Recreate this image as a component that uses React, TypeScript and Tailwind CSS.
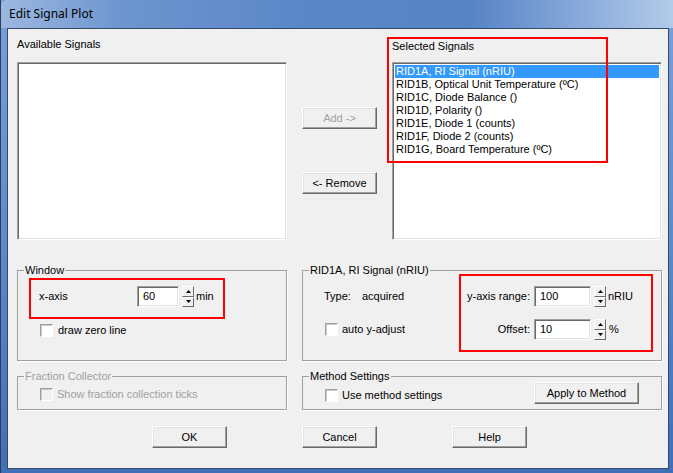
import React from 'react'

const SIGNALS = [
  'RID1A, RI Signal (nRIU)',
  'RID1B, Optical Unit Temperature (ºC)',
  'RID1C, Diode Balance ()',
  'RID1D, Polarity ()',
  'RID1E, Diode 1 (counts)',
  'RID1F, Diode 2 (counts)',
  'RID1G, Board Temperature (ºC)',
]

function Btn({ children, disabled, className = '' }: { children: React.ReactNode; disabled?: boolean; className?: string }) {
  return (
    <div
      className={`flex items-center justify-center h-[22px] bg-[#f0f0f0] border-t border-l border-white border-b border-r border-b-[#696969] border-r-[#696969] shadow-[inset_-1px_-1px_0_#a0a0a0,inset_1px_1px_0_#e3e3e3] ${disabled ? 'text-[#a0a0a0]' : 'text-black'} ${className}`}
    >
      {children}
    </div>
  )
}

function Sunken({ className = '', children }: { className?: string; children?: React.ReactNode }) {
  return (
    <div
      className={`bg-white border-t border-l border-[#a0a0a0] border-b border-r border-b-white border-r-white shadow-[inset_1px_1px_0_#696969,inset_-1px_-1px_0_#e3e3e3] ${className}`}
    >
      {children}
    </div>
  )
}

function Spinner() {
  return (
    <div className="flex flex-col w-[12px] h-[21px] ml-[3px]">
      {[0, 1].map(i => (
        <div
          key={i}
          className="flex-1 flex items-center justify-center bg-[#f0f0f0] border-t border-l border-white border-b border-r border-b-[#696969] border-r-[#696969]"
        >
          <svg width="5" height="3" viewBox="0 0 5 3">
            {i === 0 ? <polygon points="2.5,0 5,3 0,3" fill="#000" /> : <polygon points="0,0 5,0 2.5,3" fill="#000" />}
          </svg>
        </div>
      ))}
    </div>
  )
}

function Check({ disabled }: { disabled?: boolean }) {
  return (
    <div
      className={`w-[13px] h-[13px] shrink-0 border-t border-l border-[#a0a0a0] border-b border-r border-b-white border-r-white shadow-[inset_1px_1px_0_#c8c8c8] ${disabled ? 'bg-[#f0f0f0]' : 'bg-white'}`}
    />
  )
}

function Group({ label, disabled, className = '', children }: { label: string; disabled?: boolean; className?: string; children?: React.ReactNode }) {
  return (
    <fieldset className={`border border-[#a0a0a0] shadow-[1px_1px_0_#fff] ${className}`}>
      <legend className={`ml-[6px] px-[1px] leading-[13px] ${disabled ? 'text-[#a0a0a0]' : 'text-black'}`}>{label}</legend>
      {children}
    </fieldset>
  )
}

export default function App() {
  return (
    <div className="relative w-[673px] h-[473px] overflow-hidden font-['Liberation_Sans',Arial,sans-serif] text-[11px] leading-[13px] bg-[linear-gradient(180deg,#7aa0d6_0%,#5f8acb_50%,#3f6fb5_100%)] border-l border-[#2b3f5c]">
      {/* title bar */}
      <div className="h-[28px] flex items-center pl-[8px] rounded-tl-[6px] bg-[linear-gradient(90deg,#9cb8e0_0%,#6d95cf_18%,#5b87c7_45%,#5784c5_70%,#8eaedd_88%,#b3cbea_100%)]">
        <span className="font-['Noto_Sans',sans-serif] text-[12px] text-black -mt-[1px]">Edit Signal Plot</span>
      </div>

      {/* client area */}
      <div className="ml-[6px] w-[662px] h-[441px] border border-[#34496b] bg-[#f0f0f0] pl-[9px]">
        {/* signal lists */}
        <div className="flex">
          <div className="w-[270px]">
            <div className="mt-[9px] h-[13px]">Available Signals</div>
            <Sunken className="mt-[11px] h-[178px]" />
          </div>
          <div className="w-[75px] ml-[15px]">
            <Btn disabled className="mt-[78px]">Add -&gt;</Btn>
            <Btn className="mt-[43px]">&lt;- Remove</Btn>
          </div>
          <div className="w-[270px] ml-[15px]">
            <div className="mt-[11px] h-[13px]">Selected Signals</div>
            <Sunken className="mt-[9px] h-[178px] p-[2px]">
              {SIGNALS.map((s, i) => (
                <div key={s} className={`h-[13px] pl-[1px] whitespace-nowrap ${i === 0 ? 'bg-[#3399ff] text-white' : 'text-black'}`}>
                  {s}
                </div>
              ))}
            </Sunken>
          </div>
        </div>

        {/* window + signal settings */}
        <div className="flex mt-[24px]">
          <Group label="Window" className="w-[270px] h-[97px]">
            <div className="pl-[21px]">
              <div className="flex items-center mt-[9px] h-[21px]">
                <span className="w-[98px]">x-axis</span>
                <Sunken className="w-[42px] h-[21px] pl-[5px] flex items-center">60</Sunken>
                <Spinner />
                <span className="ml-[2px]">min</span>
              </div>
              <div className="flex items-center mt-[17px] pl-[1px]">
                <Check />
                <span className="ml-[5px]">draw zero line</span>
              </div>
            </div>
          </Group>
          <Group label="RID1A, RI Signal (nRIU)" className="w-[360px] h-[97px] ml-[15px]">
            <div className="flex items-center mt-[9px] h-[21px]">
              <div className="w-[157px] pl-[21px] flex">
                <span className="w-[38px]">Type:</span>
                <span>acquired</span>
              </div>
              <span className="w-[70px] text-right">y-axis range:</span>
              <Sunken className="ml-[4px] w-[57px] h-[21px] pl-[5px] flex items-center">100</Sunken>
              <Spinner />
              <span className="ml-[2px]">nRIU</span>
            </div>
            <div className="flex items-center mt-[12px] h-[21px]">
              <div className="w-[157px] pl-[22px] flex items-center">
                <Check />
                <span className="ml-[4px]">auto y-adjust</span>
              </div>
              <span className="w-[70px] text-right">Offset:</span>
              <Sunken className="ml-[4px] w-[57px] h-[21px] pl-[5px] flex items-center">10</Sunken>
              <Spinner />
              <span className="ml-[3px]">%</span>
            </div>
          </Group>
        </div>

        {/* fraction + method */}
        <div className="flex mt-[9px]">
          <Group label="Fraction Collector" disabled className="w-[270px] h-[40px]">
            <div className="flex items-center mt-[5px] pl-[22px] text-[#a0a0a0]">
              <Check disabled />
              <span className="ml-[4px]">Show fraction collection ticks</span>
            </div>
          </Group>
          <Group label="Method Settings" className="w-[360px] h-[40px] ml-[15px]">
            <div className="flex items-center pl-[22px] h-[25px]">
              <Check />
              <span className="ml-[4px]">Use method settings</span>
              <Btn className="ml-auto mr-[22px] w-[105px] -mt-[5px]">Apply to Method</Btn>
            </div>
          </Group>
        </div>

        {/* dialog buttons */}
        <div className="flex mt-[16px] pl-[135px] gap-[75px]">
          <Btn className="w-[75px]">OK</Btn>
          <Btn className="w-[75px]">Cancel</Btn>
          <Btn className="w-[75px]">Help</Btn>
        </div>
      </div>

      {/* annotation boxes */}
      <div className="absolute left-[386px] top-[37px] w-[221px] h-[126px] border-2 border-[#ff0000]" />
      <div className="absolute left-[28px] top-[278px] w-[196px] h-[41px] border-2 border-[#ff0000]" />
      <div className="absolute left-[458px] top-[274px] w-[194px] h-[78px] border-2 border-[#ff0000]" />
    </div>
  )
}
